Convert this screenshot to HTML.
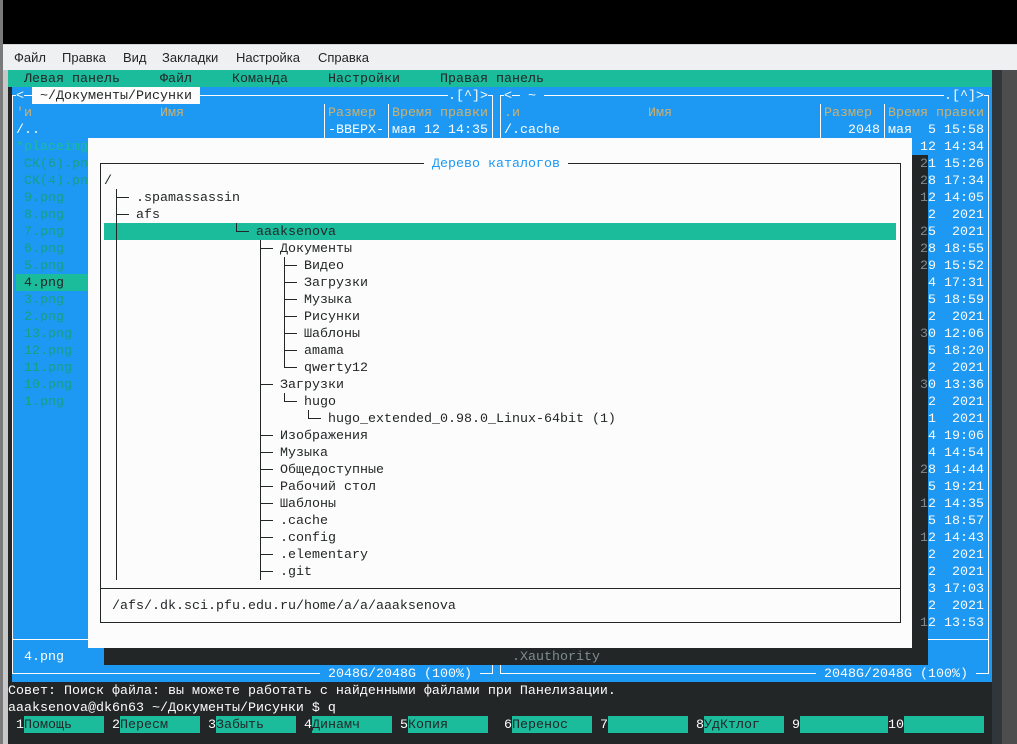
<!DOCTYPE html>
<html><head><meta charset="utf-8">
<style>
*{margin:0;padding:0;box-sizing:border-box}
body{width:1017px;height:744px;position:relative;overflow:hidden;background:#232627;font-family:"Liberation Mono","DejaVu Sans Mono",monospace;font-size:13.33px}
.a{position:absolute}
.t{position:absolute;white-space:pre;height:17px;padding-top:3px;line-height:14px}
.menu span{position:absolute;top:50px;font-family:"Liberation Sans","DejaVu Sans",sans-serif;font-size:13px;color:#232627}
</style></head><body>
<div class="a" style="left:0;top:0;width:1017px;height:45px;background:#000"></div>
<div class="a" style="left:0;top:0;width:3px;height:744px;background:#7a7a7a"></div>
<div class="a menu" style="left:3px;top:44px;width:1014px;height:26px;background:#eff0f1;border-top:1px solid #d5d5d5"></div>
<div class="menu"><span style="left:14px">Файл</span><span style="left:62px">Правка</span><span style="left:123px">Вид</span><span style="left:162px">Закладки</span><span style="left:236px">Настройка</span><span style="left:318px">Справка</span></div>
<div class="a" style="left:3px;top:70px;width:5px;height:674px;background:#c8c8c8"></div>
<div class="a" style="left:992px;top:70px;width:25px;height:674px;background:#31363b"></div>
<div class="a" style="left:1002px;top:70px;width:15px;height:674px;background:#4d4d4d"></div>
<div id="root"></div>
<script>
var R=document.getElementById('root');
function X(c){return 8+c*8}function Y(r){return 70+r*17}
function box(l,t,w,h,bg,z){var d=document.createElement('div');d.className='a';d.style.cssText='left:'+l+'px;top:'+t+'px;width:'+w+'px;height:'+h+'px;background:'+bg+';z-index:'+(z||0);R.appendChild(d);}
function T(c,r,s,col,bg,z){var d=document.createElement('div');d.className='t';d.textContent=s;d.style.cssText='left:'+X(c)+'px;top:'+Y(r)+'px;color:'+col+';'+(bg?'background:'+bg+';':'')+'z-index:'+(z||0);R.appendChild(d);}
var W='#fcfcfc',B='#1d99f3',TL='#1abc9c',D='#232627',H='#cdb06f';
box(8,70,984,17,TL);
T(2,0,'Левая панель',D);T(19,0,'Файл',D);T(28,0,'Команда',D);T(40,0,'Настройки',D);T(54,0,'Правая панель',D);
box(12,87,484,595,B);box(496,87,496,595,B);
function hl(x1,x2,y,c,z){box(x1,Math.round(y),x2-x1+1,1,c||W,z)}
function vl(x,y1,y2,c,z){box(x,Math.round(y1),1,Math.round(y2-y1),c||W,z)}
function frame(c0,c1){var x0=X(c0)+4,x1=X(c1)+4,y0=Y(1)+8,y1=Y(35)+8;
 hl(x0,x1,y0);hl(x0,x1,y1);vl(x0,y0,y1+1);vl(x1,y0,y1+1);hl(x0,x1,Y(33)+8);}
frame(0,60);frame(61,122);
T(1,1,'<',W,B);T(3,1,' ~/Документы/Рисунки ',D,W);T(55,1,'.[^]>',W,B);
T(62,1,'<',W,B);T(64,1,' ~ ',W,B);T(117,1,'.[^]>',W,B);
[39,47,101,109].forEach(function(c){vl(X(c)+4,Y(2),Y(33)+8)});
T(1,2,"'и",H);T(19,2,'Имя',H);T(40,2,'Размер',H);T(48,2,'Время правки',H);
T(1,3,'/..',W);T(40,3,'-ВВЕРХ-',W);T(48,3,'мая 12 14:35',W);
T(62,2,'.и',H);T(80,2,'Имя',H);T(102,2,'Размер',H);T(110,2,'Время правки',H);
T(62,3,'/.cache',W);T(105,3,'2048',W);T(110,3,'мая  5 15:58',W);
var FC='#16a07f';
T(1,4,'*placeimg',TL);T(2,5,'CK(6).pn',FC);T(2,6,'CK(4).pn',FC);
var fl=['9.png','8.png','7.png','6.png','5.png','4.png','3.png','2.png','13.png','12.png','11.png','10.png','1.png'];
fl.forEach(function(f,i){if(f=='4.png'){box(16,Y(7+i),80,17,TL);T(2,7+i,f,D);}else T(2,7+i,f,FC);});
T(2,34,'4.png',W);
T(39,35,' 2048G/2048G (100%) ',W,B);T(101,35,' 2048G/2048G (100%) ',W,B);
var dates=['12 14:34','21 15:26','28 17:34','12 14:05',' 2  2021','25  2021','28 18:55','29 15:52',' 4 17:31',' 5 18:59',' 2  2021','30 12:06',' 5 18:20',' 2  2021','30 13:36',' 2  2021',' 1  2021',' 4 19:06',' 4 14:54','28 14:44',' 5 19:21','12 14:35',' 5 18:57','12 14:43',' 2  2021',' 2  2021',' 3 17:03',' 2  2021','12 13:53'];
dates.forEach(function(d,i){T(114,4+i,d,W);if(i>0)T(114,4+i,d.charAt(0),'#7f8c8d',D,3);});
box(912,Y(5),16,Y(35)-Y(5),D,2);box(104,Y(34),824,17,D,2);
T(63,34,'.Xauthority','#7f8c8d',null,3);
box(88,Y(4),824,Y(34)-Y(4),W,4);
var fx0=X(11)+4,fx1=X(111)+4;
hl(fx0,fx1,Y(5)+8,D,5);hl(fx0,fx1,Y(32)+8,D,5);hl(fx0,fx1,Y(30)+8,D,5);vl(fx0,Y(5)+8,Y(32)+9,D,5);vl(fx1,Y(5)+8,Y(32)+9,D,5);
T(52,5,' Дерево каталогов ',B,W,6);
T(12,6,'/',D,null,6);
box(104,Y(9),792,17,TL,5);
function br(col,row,last,txt){var x=X(col)+4;vl(x,Y(row),last?Y(row)+9:Y(row+1),D,6);hl(x,X(col+2),Y(row)+8,D,6);T(col+3,row,txt,D,null,7);}
br(13,7,0,'.spamassassin');br(13,8,0,'afs');
for(var r=9;r<=29;r++)vl(X(13)+4,Y(r),Y(r+1),D,6);
br(28,9,1,'aaaksenova');
br(31,10,0,'Документы');
['Видео','Загрузки','Музыка','Рисунки','Шаблоны','amama'].forEach(function(s,i){br(34,11+i,0,s)});
br(34,17,1,'qwerty12');
for(r=11;r<=17;r++)vl(X(31)+4,Y(r),Y(r+1),D,6);
br(31,18,0,'Загрузки');br(34,19,1,'hugo');br(37,20,1,'hugo_extended_0.98.0_Linux-64bit (1)');
vl(X(31)+4,Y(19),Y(21),D,6);
['Изображения','Музыка','Общедоступные','Рабочий стол','Шаблоны','.cache','.config','.elementary','.git'].forEach(function(s,i){br(31,21+i,0,s)});
T(13,31,'/afs/.dk.sci.pfu.edu.ru/home/a/a/aaaksenova',D,null,6);
T(0,36,'Совет: Поиск файла: вы можете работать с найденными файлами при Панелизации.',W);
T(0,37,'aaaksenova@dk6n63 ~/Документы/Рисунки $ q',W);
var fk=['Помощь','Пересм','Забыть','Динамч','Копия','Перенос','','УдКтлог','',''];
fk.forEach(function(s,i){
 if(i==9){T(110,38,'10',W);T(112,38,'          ',D,TL);return;}
 var c=(i<5?1:2)+12*i,w=(i==8?11:10);
 T(c,38,String(i+1),W);T(c+1,38,(s+'           ').slice(0,w),D,TL);});
</script>
</body></html>
